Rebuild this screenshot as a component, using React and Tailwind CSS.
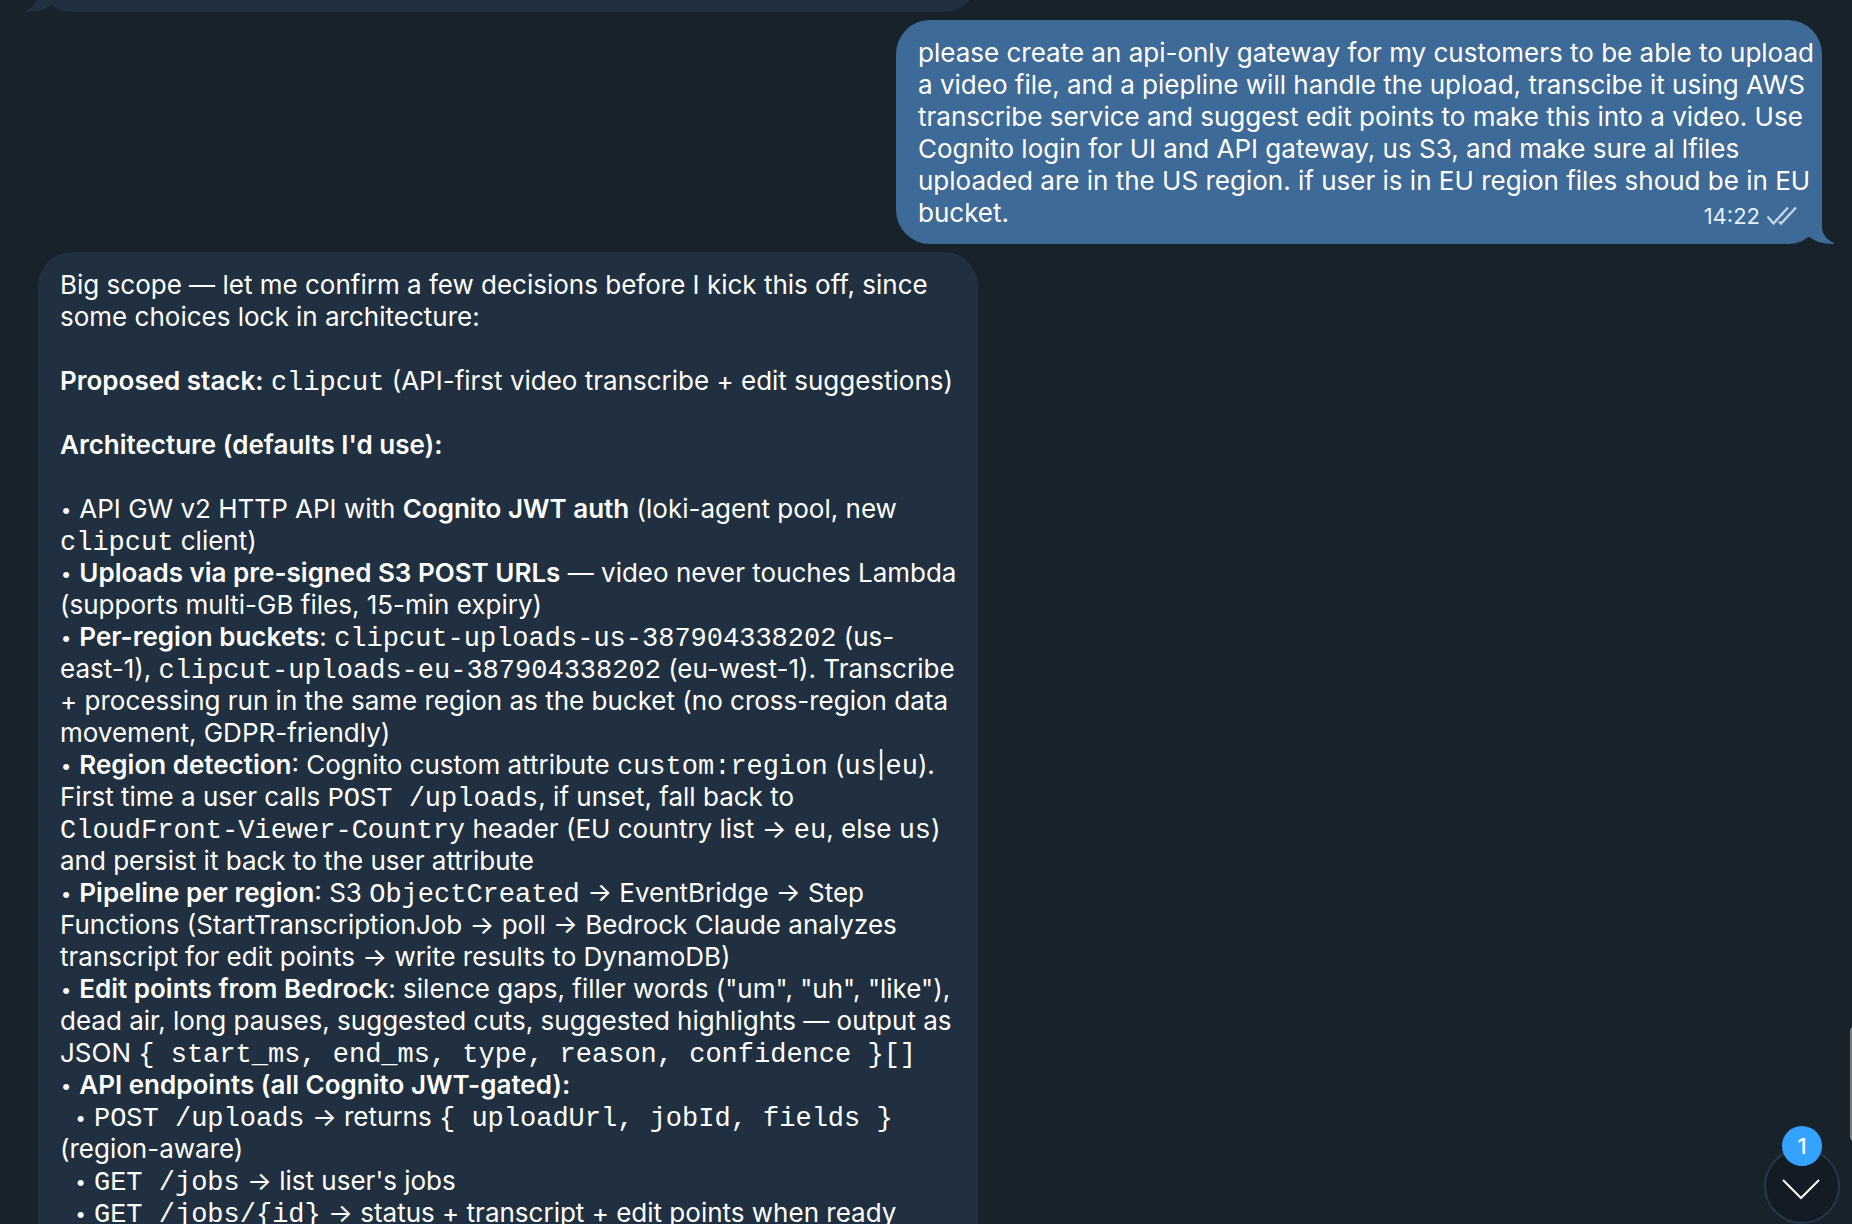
const Line = ({ children }) => <div className="h-8">{children}</div>;

const Code = ({ children }) => (
  <code className="font-['Liberation_Mono',monospace] text-[27px] leading-none font-normal">
    {children}
  </code>
);

const B = ({ children }) => <b className="font-semibold">{children}</b>;

const Bullet = () => (
  <span className="inline-block w-3 text-center font-['Liberation_Sans',sans-serif] text-[22px] leading-none">
    •
  </span>
);

const Tail = ({ className }) => (
  <svg
    className={`absolute bottom-0 h-10 w-10 ${className}`}
    viewBox="0 0 40 40"
    fill="currentColor"
    aria-hidden="true"
  >
    <path d="M26 0V23C26 30 31 36 38 39V40C26 40 18 37 12 32L0 22V0Z" />
  </svg>
);

const ReadTicks = () => (
  <svg
    className="h-5 w-8"
    viewBox="0 0 32 20"
    fill="none"
    stroke="currentColor"
    strokeWidth="2.4"
    strokeOpacity="0.8"
    role="img"
    aria-label="Read"
  >
    <path d="M1.5 10.5L7.5 17.5L22 1.5" />
    <path d="M13 15.5L15 17.5L30 1.5" />
  </svg>
);

const App = () => {
  return (
    <div className="relative h-screen overflow-hidden bg-[#18222b] font-['Inter',sans-serif] text-[26px] leading-8 text-white">
      <main className="flex flex-col gap-2 pr-[30px] pl-[38px]">
        <div className="relative -mt-17 h-20 w-full max-w-[940px] rounded-[34px] bg-[#203040] text-[#203040]">
          <Tail className="-left-3.5 -scale-x-100" />
        </div>

        <article className="relative w-full max-w-[926px] self-end rounded-[34px] bg-[#3e6a97] px-[22px] pt-[17px] pb-[15px] whitespace-pre">
          <Tail className="-right-3.5 text-[#3e6a97]" />
          <div className="relative">
            <Line>please create an api-only gateway for my customers to be able to upload</Line>
            <Line>a video file, and a piepline will handle the upload, transcibe it using AWS</Line>
            <Line>transcribe service and suggest edit points to make this into a video. Use</Line>
            <Line>Cognito login for UI and API gateway, us S3, and make sure al lfiles</Line>
            <Line>uploaded are in the US region. if user is in EU region files shoud be in EU</Line>
            <div className="flex h-8 justify-between">
              <span>bucket.</span>
              <span className="flex items-center gap-1.5 pt-1.5 pr-0.5 text-[22px] text-[#e6f2fc]">
                <time>14:22</time>
                <ReadTicks />
              </span>
            </div>
          </div>
        </article>

        {/* long message, keeps going below the fold */}
        <article className="w-full max-w-[940px] rounded-[34px] bg-[#203040] px-[22px] pt-[17px] pb-20 whitespace-pre">
          <Line>Big scope — let me confirm a few decisions before I kick this off, since</Line>
          <Line>some choices lock in architecture:</Line>
          <Line />
          <Line>
            <B>Proposed stack:</B> <Code>clipcut</Code> (API-first video transcribe + edit suggestions)
          </Line>
          <Line />
          <Line>
            <B>Architecture (defaults I'd use):</B>
          </Line>
          <Line />
          <Line>
            <Bullet /> API GW v2 HTTP API with <B>Cognito JWT auth</B> (loki-agent pool, new
          </Line>
          <Line>
            <Code>clipcut</Code> client)
          </Line>
          <Line>
            <Bullet /> <B>Uploads via pre-signed S3 POST URLs</B> — video never touches Lambda
          </Line>
          <Line>(supports multi-GB files, 15-min expiry)</Line>
          <Line>
            <Bullet /> <B>Per-region buckets</B>: <Code>clipcut-uploads-us-387904338202</Code> (us-
          </Line>
          <Line>
            east-1), <Code>clipcut-uploads-eu-387904338202</Code> (eu-west-1). Transcribe
          </Line>
          <Line>+ processing run in the same region as the bucket (no cross-region data</Line>
          <Line>movement, GDPR-friendly)</Line>
          <Line>
            <Bullet /> <B>Region detection</B>: Cognito custom attribute <Code>custom:region</Code> (<Code>us</Code>|<Code>eu</Code>).
          </Line>
          <Line>
            First time a user calls <Code>POST /uploads</Code>, if unset, fall back to
          </Line>
          <Line>
            <Code>CloudFront-Viewer-Country</Code> header (EU country list → <Code>eu</Code>, else <Code>us</Code>)
          </Line>
          <Line>and persist it back to the user attribute</Line>
          <Line>
            <Bullet /> <B>Pipeline per region</B>: S3 <Code>ObjectCreated</Code> → EventBridge → Step
          </Line>
          <Line>Functions (StartTranscriptionJob → poll → Bedrock Claude analyzes</Line>
          <Line>transcript for edit points → write results to DynamoDB)</Line>
          <Line>
            <Bullet /> <B>Edit points from Bedrock</B>: silence gaps, filler words ("um", "uh", "like"),
          </Line>
          <Line>dead air, long pauses, suggested cuts, suggested highlights — output as</Line>
          <Line>
            JSON <Code>{"{ start_ms, end_ms, type, reason, confidence }[]"}</Code>
          </Line>
          <Line>
            <Bullet /> <B>API endpoints (all Cognito JWT-gated):</B>
          </Line>
          <Line>
            {"  "}
            <Bullet /> <Code>POST /uploads</Code> → returns <Code>{"{ uploadUrl, jobId, fields }"}</Code>
          </Line>
          <Line>(region-aware)</Line>
          <Line>
            {"  "}
            <Bullet /> <Code>GET /jobs</Code> → list user's jobs
          </Line>
          <Line>
            {"  "}
            <Bullet /> <Code>{"GET /jobs/{id}"}</Code> → status + transcript + edit points when ready
          </Line>
        </article>
      </main>

      <div className="absolute top-[1027px] -right-1.5 h-[114px] w-2 rounded-full bg-[#7b8085]" />

      <button
        type="button"
        aria-label="Scroll to bottom"
        className="absolute right-3 bottom-0 flex h-[76px] w-[76px] items-center justify-center rounded-full border-2 border-[#26384a] bg-[#131b24]"
      >
        <svg className="mt-1.5 h-6 w-10" viewBox="0 0 40 24" fill="none" stroke="currentColor" strokeWidth="2">
          <path d="M1 3L19 21L37 3" />
        </svg>
        <span className="absolute -top-6 left-4 flex h-10 w-10 items-center justify-center rounded-full bg-[#33a3ff] text-[22px] font-medium">
          1
        </span>
      </button>
    </div>
  );
};

export default App;
